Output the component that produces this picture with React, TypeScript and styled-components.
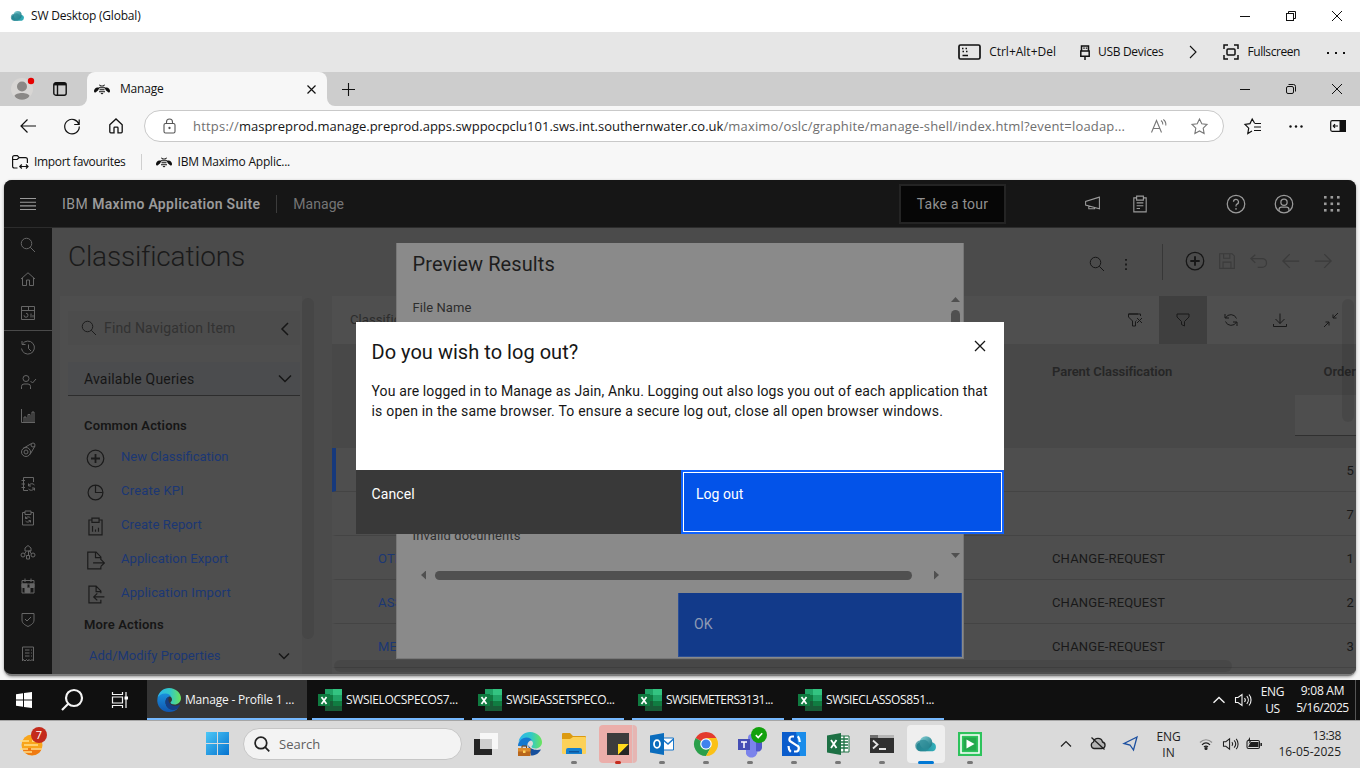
import React from "react";
import styled, { createGlobalStyle, css } from "styled-components";

const segoe = `"Open Sans", "Noto Sans", sans-serif`;
const plex = `Roboto, "Noto Sans", sans-serif`;

const GlobalStyle = createGlobalStyle`
  * { box-sizing: border-box; }
  body { margin: 0; background: #f7f7f7; font-family: ${segoe}; font-size: 12px; color: #111; overflow: hidden; }
`;

/* ---------- shared ---------- */
const Screen = styled.div`
  width: 1360px;
  height: 768px;
  display: flex;
  flex-direction: column;
  overflow: hidden;
`;
const Spacer = styled.div`flex: 1;`;
const Label = styled.span<{ $size?: number; $ls?: number; $color?: string; $w?: number; $ml?: number }>`
  white-space: pre;
  line-height: 20px;
  margin-left: ${(p) => p.$ml ?? 0}px;
  font-size: ${(p) => p.$size ?? 12}px;
  letter-spacing: ${(p) => p.$ls ?? 0}px;
  font-weight: ${(p) => p.$w ?? 400};
  ${(p) => p.$color && css`color: ${p.$color};`}
`;
const Slot = styled.div<{ $w: number; $h?: string }>`
  width: ${(p) => p.$w}px;
  height: ${(p) => p.$h ?? "100%"};
  flex: none;
  display: flex;
  align-items: center;
  justify-content: center;
`;
const Svg = styled.svg`
  display: block;
  flex: none;
  overflow: visible;
`;

type IconProps = { size?: number; w?: number; h?: number; vb?: string; sw?: number; color?: string; children?: React.ReactNode };
const Icon = ({ size = 16, w, h, vb = "0 0 32 32", sw = 2, color = "currentColor", children }: IconProps) => (
  <Svg width={w ?? size} height={h ?? size} viewBox={vb} fill="none" stroke={color} strokeWidth={sw}>
    {children}
  </Svg>
);

/* ---------- carbon style glyphs ---------- */
const glyph = {
  search: <><circle cx="13" cy="13" r="10.500" /><path d="M20.500 20.500 30 30" /></>,
  home: <path d="M2 16 16 3.500 30 16M5 14v15h8V18h6v11h8V14" />,
  dashboard: <><path d="M3 3h26v26H3zM3 11h26M17 3v8M22 17v8M26 20v5" /><path d="M12 16.500a4 4 0 1 1-4 4" /></>,
  history: <><path d="M5 8a13 13 0 1 1-2 9" /><path d="M4 2v7h7M17 9v8l5 5" /></>,
  userCheck: <><circle cx="12" cy="9" r="6" /><path d="M3 30v-5a5 5 0 0 1 5-5h8a5 5 0 0 1 5 5v5M21 14l4 4 7-8" /></>,
  chart: <path d="M3 2v27h27M8 29V18h4v11M16 29V13h4v16M24 29V8h4v21" />,
  rocket: <><circle cx="12" cy="20" r="9" /><circle cx="12" cy="20" r="4" /><circle cx="26" cy="6" r="4" /><path d="M6 13 23 3M20 25 30 8" /></>,
  notebook: <><path d="M16 29H7V3h20v9M3 9h7M3 16h7M3 23h7" /><path d="M29 18a7 7 0 0 0-12 2M17 15v5h5M17 26a7 7 0 0 0 12-2M29 29v-5h-5" /></>,
  clipRefresh: <><path d="M10 5H5v25h22V5h-5M10 2h12v7H10z" /><path d="M21 16a6 6 0 0 0-10 1M11 13v4h4M11 22a6 6 0 0 0 10-1M21 25v-4h-4" /></>,
  nodes: <><path d="M10 14V8l6-5 6 5v6h-5v8M10 14h12M9 20l3-5M23 20l-3-5" /><circle cx="6" cy="22" r="4" /><circle cx="26" cy="22" r="4" /><path d="M13 23h6v7h-6z" /></>,
  calendar: <><path d="M4 5h24v25H4zM4 12h24M10 1v7M22 1v7" /><path d="M4 12h10v7H4zM20 12h8v7h-8zM10 20h10v9H10z" fill="currentColor" /></>,
  shield: <><path d="M4 3h24v13c0 7-6 10-12 13C10 26 4 23 4 16z" /><path d="m10 14 4 4 8-8" /></>,
  receipt: <path d="M5 30V2h22v28l-3-3-3 3-3-3-2 3-3-3-3 3-3-3zM10 8h9M22 8h2M10 14h9M22 14h2M10 20h9M22 20h2" />,
  add: <><circle cx="16" cy="16" r="14" /><path d="M16 8.500v15M8.500 16h15" strokeWidth="3" /></>,
  kpi: <><circle cx="16" cy="16" r="12.500" /><path d="M16 3.500V16h12" /></>,
  report: <path d="M10 5H5v25h22V5h-5M10 2h12v7H10zM11 15v10M16 21v4M21 18v7" />,
  exportDoc: <path d="M25 26v4H3V2h14l8 8v5M16 2v9h9M12 20h18M25 14l6 6-6 6" />,
  importDoc: <path d="M25 25v5H5V2h12l8 8v4M17 2v9h8M31 20H14M19 14l-6 6 6 6" />,
  save: <path d="M3 3h22l4 4v22H3zM10 3v8h11V3M9 29V18h14v11" />,
  undo: <path d="M10 6 3 12l7 7M3 12h18a7 7 0 0 1 0 14h-7" />,
  left: <path d="M29 16H3M14 5 3 16l11 11" />,
  right: <path d="M3 16h26M18 5l11 11-11 11" />,
  filter: <path d="M4 4h24v6L19 19v9l-6-3v-6L4 10z" />,
  filterX: <path d="M22 4H3v6l8 8v10h6v-9l2-2M27 4H3M27 4v4M20 12l10 10M30 12 20 22" />,
  refresh: <path d="M4 12V4M4 12h8M5 12a12 12 0 0 1 22 1M28 20v8M28 20h-8M27 20a12 12 0 0 1-22-1" />,
  download: <path d="M16 3v20M7 14l9 9 9-9M3 24v5h26v-5" />,
  collapse: <path d="M20 5v7h7M20 12 30 2M5 20h7v7M12 20 2 30" />,
  megaphone: <path d="M29 4 3 12v7l26 7zM9 21v5h11v-2" />,
  clipboard: <path d="M10 5H5v25h22V5h-5M10 2h12v7H10zM10 14h12M10 19h12M10 24h6" />,
  help: <><circle cx="16" cy="16" r="14" /><path d="M12 12.500a4 4 0 1 1 5 4c-1 .5-1 1.200-1 3.500" /><path d="M16 22.500v2.500" /></>,
  user: <><circle cx="16" cy="16" r="14" /><circle cx="16" cy="13" r="5" /><path d="M8 27v-2a4 4 0 0 1 4-4h8a4 4 0 0 1 4 4v2" /></>,
};

/* ---------- remote desktop window chrome ---------- */
const TitleBar = styled.div`
  height: 32px; flex: none; background: #fff; display: flex; align-items: center; padding-left: 11px; gap: 6px;
`;
const WinButtons = styled.div`display: flex; height: 100%; margin-left: auto;`;
const ToolStrip = styled.div`
  height: 40px; flex: none; background: #e6e6e6; display: flex; align-items: center; justify-content: flex-end; padding-right: 15px;
`;
const ToolItem = styled.div<{ $gap: number; $mr: number }>`
  display: flex; align-items: center; gap: ${(p) => p.$gap}px; margin-right: ${(p) => p.$mr}px;
`;

const Cloud = ({ w = 14, h = 10 }: { w?: number; h?: number }) => (
  <Svg width={w} height={h} viewBox="0 0 40 30">
    <defs>
      <linearGradient id="cl1" x1="0" x2="1" y2="1"><stop offset="0" stopColor="#8ad3d8" /><stop offset="1" stopColor="#0d6f7c" /></linearGradient>
      <linearGradient id="cl2" x1="0" x2="1"><stop offset="0" stopColor="#137885" /><stop offset="1" stopColor="#35b2bd" /></linearGradient>
    </defs>
    <path d="M9 29a9 9 0 0 1-3-17h26a9 9 0 0 1 0 17z" fill="url(#cl2)" />
    <circle cx="19" cy="12" r="12" fill="url(#cl1)" />
    <path d="M9 8a11 11 0 0 1 10 21H9A10.500 10.500 0 0 1 9 8z" fill="#2b8a95" opacity=".75" />
  </Svg>
);

const MinMaxClose = ({ round }: { round?: boolean }) => (
  <WinButtons>
    <Slot $w={46}><Icon size={10} vb="0 0 10 10" sw={1}><path d="M0 5.500h10" /></Icon></Slot>
    <Slot $w={46}>
      <Icon size={10} vb="0 0 10 10" sw={1}>
        <rect x=".5" y="2.500" width="7" height="7" rx={round ? 1.5 : 0} />
        <path d={round ? "M2.500.5h5a2 2 0 0 1 2 2v5" : "M2.500 2.500v-2h7v7h-2"} />
      </Icon>
    </Slot>
    <Slot $w={46}><Icon size={10} vb="0 0 10 10" sw={1}><path d="m0 0 10 10M10 0 0 10" /></Icon></Slot>
  </WinButtons>
);

/* ---------- browser ---------- */
const TabStrip = styled.div`
  height: 34px; flex: none; background: #cdcdcd; display: flex;
`;
const TabLead = styled.div`
  width: 87px; background: #cdcdcd; border-bottom-right-radius: 8px; display: flex; align-items: center; padding-left: 11px; gap: 20px;
`;
const TabShell = styled.div`background: linear-gradient(#cdcdcd 50%, #f7f7f7 50%); display: flex; flex: 1;`;
const Tab = styled.div`
  width: 240px; background: #f7f7f7; border-radius: 8px 8px 0 0; display: flex; align-items: center; padding: 0 11px 0 7px; gap: 10px;
`;
const TabRest = styled.div`
  flex: 1; background: #cdcdcd; border-bottom-left-radius: 8px; display: flex; align-items: center; padding-left: 15px;
`;
const AddressRow = styled.div`
  height: 40px; flex: none; background: #f7f7f7; display: flex; align-items: center;
`;
const UrlBox = styled.div`
  width: 1080px; flex: none; height: 32px; border: 1px solid #c9c9c9; border-radius: 16px; background: #fff; display: flex; align-items: center; padding: 0 4px 0 18px;
`;
const UrlText = styled.div`
  margin-left: 16px; flex: 1; font-size: 13px; white-space: pre; color: #6f6f6f; line-height: 20px;
`;
const UrlPart = styled.span<{ $ls: number; $dark?: boolean }>`
  letter-spacing: ${(p) => p.$ls}px; ${(p) => p.$dark && css`color: #161616;`}
`;
const Bookmarks = styled.div`
  height: 34px; flex: none; background: #f7f7f7; display: flex; align-items: center; padding: 0 0 3px 12px;
`;
const BookmarkSep = styled.div`width: 1px; height: 16px; background: #cfcfcf; margin: 0 14px 0 15px;`;

const Bee = () => (
  <Svg width="16" height="12" viewBox="0 0 32 24" fill="#111">
    <path d="M11 9H6c-4 1-6 4-6 7 0 2 1 3 3 3 2-1 3-3 5-4 1-2 2-3 3-6zM21 9h5c4 1 6 4 6 7 0 2-1 3-3 3-2-1-3-3-5-4-1-2-2-3-3-6z" />
    <path d="M11 3l3 2h4l3-2 1 1-3 3h-6l-3-3zM10 8.500h12v2H10zM11 12.500h10v2H11zM10 16.500h12v2H10zM13 20h6L16 23z" />
  </Svg>
);

/* ---------- application frame ---------- */
const FrameWrap = styled.div`
  height: 500px; flex: none; background: #f5f5f5; padding: 0 4px 4px; 
`;
const Frame = styled.div`
  height: 496px; position: relative; border-radius: 8px; overflow: hidden; background: #4c4c4c; border-bottom: 2px solid #7d7d7d;
  box-shadow: 0 1px 3px #999; display: flex; flex-direction: column; font-family: ${plex}; color: #161616;
`;
const AppHeader = styled.div`
  height: 48px; flex: none; background: #161616; border-bottom: 1px solid #2c2c2c; display: flex; align-items: center; color: #9a9a9a;
`;
const HeaderDivider = styled.div`width: 1px; height: 18px; background: #3c3c3c; margin: 0 16px;`;
const TourButton = styled.div`
  width: 107px; height: 40px; margin: 1px 62px 0 auto; border: 2px solid #242424; background: #060606; color: #909090;
  display: flex; align-items: center; justify-content: center;
`;
const AppBody = styled.div`flex: 1; min-height: 0; display: flex;`;
const Rail = styled.div`width: 48px; flex: none; background: #161616; color: #666;`;
const RailItem = styled.div<{ $rule?: boolean }>`
  height: ${(p) => (p.$rule ? 35 : 34)}px; display: flex; align-items: center; justify-content: center;
  ${(p) => p.$rule && css`border-bottom: 1px solid #4a4a4a;`}
`;
const Main = styled.div`flex: 1; min-width: 0; display: flex; flex-direction: column; background: #4b4b4b;`;
const PageHead = styled.div`height: 68px; flex: none; display: flex; align-items: flex-start; padding: 0 17px 0 16px;`;
const PageTitle = styled.h1`
  margin: 11px auto 0 0; font-weight: 300; font-size: 28px; letter-spacing: -0.18px; line-height: 36px; color: #1a1a1a;
`;
const HeadRule = styled.div`width: 1px; height: 36px; margin: 16px 16px 0 24px; background: #373737;`;
const Columns = styled.div`flex: 1; min-height: 0; display: flex; padding-left: 8px;`;

const Nav = styled.div`width: 242px; flex: none; background: #4e4e4e; padding: 15px 2px 0 8px; display: flex; flex-direction: column;`;
const NavScroll = styled.div`width: 12px; height: 341px; margin: 2px 18px 0 0; border-radius: 6px; background: #464646; flex: none;`;
const FindRow = styled.div`
  height: 34px; flex: none; display: flex; align-items: center; padding: 0 9px 0 13px; gap: 7px; color: #323232; background: #4c4c4c;
`;
const QueryRow = styled.div`
  height: 34px; flex: none; margin-top: 17px; border-bottom: 1px solid #2d2d2d; background: #4b4c4e; display: flex; align-items: center; padding: 0 9px 0 16px; justify-content: space-between;
`;
const NavHeading = styled.div<{ $mt: number }>`
  margin: ${(p) => p.$mt}px 0 0 16px; height: 20px; line-height: 20px; font-size: 13px; font-weight: 600; letter-spacing: 0.15px; white-space: pre; flex: none;
`;
const NavList = styled.div`padding-top: 4px; flex: none;`;
const NavItem = styled.div`
  height: 34px; display: flex; padding-left: 18px; gap: 17px; color: #1b1b1b;
`;
const NavIcon = styled.div`padding-top: 3px; height: 34px; width: 18px; display: flex; align-items: center; justify-content: center;`;
const NavLink = styled.span<{ $ls?: number }>`
  font-size: 13px; line-height: 34px; color: #1b3774; white-space: pre; letter-spacing: ${(p) => p.$ls ?? 0}px;
`;
const MoreRow = styled.div`height: 40px; flex: none; display: flex; align-items: center; padding: 2px 11px 0 21px; justify-content: space-between;`;

const Table = styled.div`flex: 1; min-width: 0; display: flex; flex-direction: column; background: #4e4e4e; overflow: hidden;`;
const TableTools = styled.div`height: 48px; flex: none; display: flex; align-items: center; padding-left: 18px; background: #4f4f4f; color: #191919;`;
const ToolCell = styled.div<{ $on?: boolean; $w?: number }>`
  width: ${(p) => p.$w ?? 48}px; height: 48px; display: flex; align-items: center; justify-content: center; flex: none;
  background: ${(p) => (p.$on ? "#3f3f3f" : "transparent")};
`;
const TableHead = styled.div`
  height: 104px; flex: none; background: #484848; display: flex; padding: 18px 0 0 720px; justify-content: space-between; color: #262626;
`;
const OrderCol = styled.div`display: flex; flex-direction: column; align-items: flex-end; gap: 13px;`;
const FilterField = styled.div`width: 61px; height: 41px; background: #4e4e4e; border-bottom: 1px solid #303030;`;
const TableRow = styled.div<{ $first?: boolean }>`
  height: 44px; flex: none; border-bottom: 1px solid #444; display: flex; align-items: center; color: #191919;
  border-left: 4px solid ${(p) => (p.$first ? "#16397c" : "transparent")};
  padding: 2px 2px 0 42px;
`;
const Cell = styled.span<{ $w?: number; $link?: boolean; $end?: boolean }>`
  font-size: 13px; white-space: pre; letter-spacing: 0.15px;
  ${(p) => p.$w && css`width: ${p.$w}px;`}
  ${(p) => p.$link && css`color: #1b3774;`}
  ${(p) => p.$end && css`margin-left: auto;`}
`;
const ScrollOverlay = styled.div<{ $x: number; $y: number; $w: number; $h: number }>`
  position: absolute; left: ${(p) => p.$x}px; top: ${(p) => p.$y}px; width: ${(p) => p.$w}px; height: ${(p) => p.$h}px;
  border-radius: 7px; background: rgba(0, 0, 0, 0.08);
`;

/* ---------- dialogs ---------- */
const Preview = styled.div`
  position: absolute; left: 392px; top: 63px; width: 568px; height: 416px; background: #8a8a8a; border: 1px solid #777; border-width: 0 1px 1px 1px;
  display: flex; flex-direction: column; color: #1d1d1d;
`;
const PreviewTitle = styled.div`font-size: 20px; line-height: 28px; letter-spacing: 0.1px; padding: 7px 15.5px 0; height: 50px; flex: none;`;
const PreviewBody = styled.div`flex: 1; display: flex; padding-left: 15.5px;`;
const PreviewFields = styled.div`flex: 1; display: flex; flex-direction: column; justify-content: space-between; padding: 5px 0 24px; color: #2d2d2d;`;
const VScroll = styled.div`width: 15px; display: flex; flex-direction: column; align-items: center; justify-content: space-between; padding: 4px 0 12px;`;
const VThumb = styled.div`width: 9px; flex: 1; margin: 8px 0 150px; border-radius: 5px; background: #505050;`;
const HScroll = styled.div`height: 10px; display: flex; align-items: center; padding: 0 24px 0 24px;`;
const HThumb = styled.div`flex: 1; height: 9px; margin: 0 22px 0 9px; border-radius: 5px; background: #505050;`;
const Arrow = styled.div<{ $dir: "up" | "down" | "left" | "right" }>`
  width: ${(p) => (p.$dir === "up" || p.$dir === "down" ? 9 : 5)}px;
  height: ${(p) => (p.$dir === "up" || p.$dir === "down" ? 5 : 9)}px;
  flex: none;
  background: #505050;
  clip-path: ${(p) =>
    ({ up: "polygon(50% 0,100% 100%,0 100%)", down: "polygon(0 0,100% 0,50% 100%)", left: "polygon(100% 0,100% 100%,0 50%)", right: "polygon(0 0,100% 50%,0 100%)" })[p.$dir]};
`;
const PreviewFoot = styled.div`height: 78px; display: flex; justify-content: flex-end; padding: 13px 1px 1px 0;`;
const OkButton = styled.div`width: 284px; height: 64px; background: #123a8a; border: 1px solid #2b4f96; border-width: 0 1px 1px 1px; padding: 21px 15px; color: #8e9ab4;`;

const LogoutDialog = styled.div`
  position: absolute; left: 352px; top: 142px; width: 648px; height: 212px; background: #fff; display: flex; flex-direction: column; color: #161616;
`;
const LogoutTop = styled.div`display: flex; justify-content: space-between; padding: 16px 19px 0 15.5px; height: 48px;`;
const LogoutTitle = styled.div`font-size: 20px; line-height: 28px; letter-spacing: 0.03px;`;
const LogoutText = styled.div`padding: 11px 15.5px 0; font-size: 14px; line-height: 20px; height: 100px; white-space: pre;`;
const LogoutLine = styled.div<{ $ls: number }>`letter-spacing: ${(p) => p.$ls}px;`;
const LogoutFoot = styled.div`height: 64px; display: flex; color: #fff;`;
const DialogButton = styled.div<{ $primary?: boolean }>`
  width: ${(p) => (p.$primary ? 323 : 325)}px; padding: 14px 15.5px;
  background: #393939;
  ${(p) => p.$primary && css`background: #0353e9; border: 2px solid #0f62fe; box-shadow: inset 0 0 0 1px #fff; padding: 12px 13px;`}
`;

/* ---------- remote taskbar ---------- */
const DarkBar = styled.div`height: 40px; flex: none; background: #101010; display: flex; color: #f4f4f4;`;
const DarkApp = styled.div<{ $on?: boolean }>`
  width: ${(p) => (p.$on ? 160 : 152)}px; margin: 0 ${(p) => (p.$on ? 5 : 8)}px 0 ${(p) => (p.$on ? 3 : 0)}px; padding: 1px 0 0 ${(p) => (p.$on ? 10 : 6)}px;
  display: flex; align-items: center; gap: 4px; border-bottom: 2px solid #76b9ff; background: ${(p) => (p.$on ? "#353535" : "transparent")};
`;
const TwoLine = styled.div<{ $w: number; $lh: number; $pt: number; $align?: string }>`
  width: ${(p) => p.$w}px; padding-top: ${(p) => p.$pt}px; display: flex; flex-direction: column; align-items: ${(p) => p.$align ?? "center"};
  & > span { line-height: ${(p) => p.$lh}px; }
`;
const BarEnd = styled.div`width: 1px; background: #555; margin-right: 4px;`;

/* ---------- host taskbar ---------- */
const LightBar = styled.div`
  height: 48px; flex: none; background: #dadada; border-top: 1px solid #a6a6a6; padding-bottom: 2px; display: flex; align-items: center; color: #1f1f1f;
`;
const WeatherSlot = styled.div`position: relative; width: 48px; height: 47px; padding: 14px 0 0 20px;`;
const Badge = styled.div`
  position: absolute; left: 31px; top: 7px; width: 16px; height: 16px; border-radius: 8px; background: #c42b1c; color: #fff; font-size: 11px; line-height: 16px; text-align: center;
`;
const SearchPill = styled.div`
  width: 219px; height: 32px; margin: 0 2px 0 14px; border-radius: 16px; background: #f3f3f3; border: 1px solid #c6c6c6; display: flex; align-items: center; padding-left: 10px; gap: 9px; color: #5e5e5e;
`;
const DockItem = styled.div<{ $bg?: string }>`
  width: 38px; margin: 0 3px; height: 38px; border-radius: 4px; display: flex; align-items: center; justify-content: center; position: relative;
  background: ${(p) => p.$bg ?? "transparent"};
`;
const Dot = styled.div<{ $c?: string; $w?: number }>`
  position: absolute; bottom: -1px; left: ${(p) => 19 - (p.$w ?? 6) / 2}px; width: ${(p) => p.$w ?? 6}px; height: 3px; border-radius: 2px; background: ${(p) => p.$c ?? "#777"};
`;

const EdgeGradients = () => (
  <defs>
    <linearGradient id="eg1" x1="0" x2="1"><stop offset="0" stopColor="#2bb4ee" /><stop offset=".55" stopColor="#33c9c5" /><stop offset="1" stopColor="#6be45a" /></linearGradient>
    <linearGradient id="eg2" x1="0" y1="0" x2="0" y2="1"><stop offset="0" stopColor="#1a8fdc" /><stop offset="1" stopColor="#1055ae" /></linearGradient>
  </defs>
);
const Edge = () => (
  <Svg width="24" height="24" viewBox="0 0 48 48">
    <EdgeGradients />
    <path d="M1 20C3 8 13 0 24 0c14 0 24 11 24 20 0 8-6 13-13 13-5 0-8-2-8-4 0-1 3-2 3-6 0-4-4-9-12-9C8 14 2 18 1 20z" fill="url(#eg1)" />
    <path d="M1 20c2-5 8-9 16-9 6 0 10 3 11 6-4-1-11 3-11 11 0 8 6 15 15 15 5 0 9-2 11-4-4 6-11 9-19 9C10 48-2 36 1 20z" fill="url(#eg2)" />
    <path d="M17 28c0-6 3-10 8-11-3 3-3 9 0 13 4 6 13 7 19 4 1-1 2 0 1 2-3 5-8 8-13 8-9 0-15-8-15-16z" fill="#153e85" />
  </Svg>
);
const Excel = () => (
  <Svg width="24" height="22" viewBox="0 0 24 22">
    <path d="M7 0h8v6H7z" fill="#21a366" /><path d="M15 0h9v6h-9z" fill="#33c481" />
    <path d="M7 6h8v6H7zM15 12h9v5h-9z" fill="#107c41" /><path d="M15 6h9v6h-9z" fill="#21a366" />
    <path d="M7 12h8v5H7zM7 17h17v5H7z" fill="#185c37" />
    <path d="M0 5h12v12H0z" fill="#0f7a40" />
    <path d="m3.500 8 5 7M8.500 8l-5 7" stroke="#fff" strokeWidth="1.700" />
  </Svg>
);
const Volume = ({ w = 17 }: { w?: number }) => (
  <Icon w={w} h={14} vb="0 0 17 14" sw={1.1}>
    <path d="M.5 4.500h2.500L7 1.500v11L3 9.500H.5zM9.500 5c1 1.200 1 2.800 0 4M11.800 3.200c2 2.200 2 5.400 0 7.600M14 1.500c2.700 3 2.700 8 0 11" />
  </Icon>
);
const Chevron = ({ d, w, h, sw = 1.5 }: { d: string; w: number; h: number; sw?: number }) => (
  <Icon w={w} h={h} vb={`0 0 ${w} ${h}`} sw={sw}><path d={d} /></Icon>
);

const dock: { bg?: string; dot?: string; dotW?: number; art: React.ReactNode }[] = [
  { art: <Svg width="24" height="22" viewBox="0 0 24 22"><path d="M0 6h18v16H0z" fill="#252525" /><path d="M6 0h18v16H6z" fill="#fff" opacity=".78" /></Svg> },
  { art: <Svg width="24" height="24" viewBox="0 0 48 48"><path d="M1 20C3 8 13 0 24 0c14 0 24 11 24 20 0 8-6 13-13 13-5 0-8-2-8-4 0-1 3-2 3-6 0-4-4-9-12-9C8 14 2 18 1 20z" fill="url(#eg1)" /><path d="M0 28c0-9 8-17 17-17 6 0 10 3 11 6-5-1-10 4-9 12z" fill="#1478d0" /><path d="M20 26c6 10 16 11 26 9-5 9-12 12-20 12z" fill="#164f9c" /><path d="M0 32h25v16H0z" fill="#b8661b" /><path d="M0 32h25v7H0z" fill="#dc8b2c" /><path d="M8 32v-4h9v4" fill="none" stroke="#7b4312" strokeWidth="2" /><path d="M10 37h5v5h-5z" fill="#ffd45c" /></Svg> },
  { dot: "#777", art: <Svg width="24" height="22" viewBox="0 0 24 22"><path d="M0 1q0-1 1-1h7l3 3h12q1 0 1 1v6H0z" fill="#dc9a10" /><path d="M0 6h8l3-2h12q1 0 1 1v15q0 1-1 1H1q-1 0-1-1z" fill="#fcd158" /><path d="M4 21v-4q0-2 2-2h12q2 0 2 2v4z" fill="#1580cf" /><path d="M7 18h10v1.500H7z" fill="#0c549c" /></Svg> },
  { dot: "#c42b1c", bg: "linear-gradient(90deg, #ebaeaa 33px, #dcc6c4 33px 34px, #e6b5b2 34px)", art: <Svg width="22" height="22" viewBox="0 0 22 22"><path d="M0 0h22v22H0z" fill="#3c3c3c" /><path d="M11 11h11L11 22z" fill="#ffd91c" /><path d="M22 11v11H11z" fill="#252525" /></Svg> },
  { dot: "#777", art: <Svg width="24" height="22" viewBox="0 0 24 22"><path d="M12 5h11.500v12H12z" fill="#fff" stroke="#1a77c9" /><path d="m12 6 6 5 5.500-5" fill="none" stroke="#1a77c9" strokeWidth="1.500" /><path d="M0 2.500 14 0v22L0 19.500z" fill="#0a6cbd" /><ellipse cx="7" cy="11" rx="3" ry="3.800" fill="none" stroke="#fff" strokeWidth="1.800" /></Svg> },
  { dot: "#777", art: <Svg width="24" height="24" viewBox="0 0 24 24"><path d="M12 12 1.600 6A12 12 0 0 1 22.400 6z" fill="#e33b2e" /><path d="M12 12 1.600 6A12 12 0 0 0 12 24l5-9z" fill="#2a9f4a" /><path d="M12 6h10.400A12 12 0 0 1 12 24l5-9z" fill="#fbc116" /><circle cx="12" cy="12" r="5.800" fill="#fff" /><circle cx="12" cy="12" r="4.600" fill="#3f82ed" /></Svg> },
  { dot: "#777", art: <Svg width="24" height="24" viewBox="0 0 24 24"><circle cx="14" cy="6" r="4" fill="#7b83eb" /><path d="M8 9h11v8a5.500 5.500 0 0 1-11 5z" fill="#7b83eb" /><path d="M18 10h6v6a4 4 0 0 1-6 3z" fill="#5059c9" /><path d="M0 7h12v11H0z" fill="#454eb5" /><path d="M3 10h6M6 10v6" stroke="#fff" strokeWidth="1.500" fill="none" /><circle cx="21" cy="3" r="8" fill="#13a10e" /><path d="m17.800 3.200 2.400 2.300 4-4.300" stroke="#fff" strokeWidth="1.600" fill="none" /></Svg> },
  { dot: "#777", art: <Svg width="24" height="24" viewBox="0 0 24 24"><path d="M0 0h24v24H0z" fill="#0a5ccc" /><path d="M14 0h10v24h-6z" fill="#1a8cea" /><path d="M12 4.500h-1.500a2.800 2.800 0 0 0-1.500 5.300l6 3.800a3.100 3.100 0 0 1-1.500 5.900H12M6.500 14c0 2.500.8 4.500 2.300 5.800M17.800 10c0-2.500-.6-4.300-2-5.800" stroke="#fff" strokeWidth="2.200" fill="none" /></Svg> },
  { dot: "#777", art: <Svg width="22" height="22" viewBox="0 0 22 22"><path d="M12 3h10v16H12z" fill="#fff" stroke="#1f7345" /><path d="M12 6h9M12 9h9M12 12h9M12 15h9M17 3v16" stroke="#1f7345" strokeWidth="1.300" /><path d="M0 2.500 14 0v22L0 19.500z" fill="#1d7044" /><path d="m4 7 5.500 8M9.500 7 4 15" stroke="#fff" strokeWidth="1.800" /></Svg> },
  { dot: "#777", art: <Svg width="24" height="18" viewBox="0 0 24 18"><path d="M0 0h24v18H0z" fill="#303030" /><path d="M0 0h24v3H0z" fill="#b5b5b5" /><path d="M0 0h8v3H0z" fill="#707070" /><path d="m3 5.500 4.500 4L3 13.500M9 14h7" stroke="#e5e5e5" strokeWidth="1.800" fill="none" /></Svg> },
  { dot: "#0078d4", dotW: 16, bg: "#efefef", art: <Cloud w={21} h={16} /> },
  { dot: "#777", art: <Svg width="24" height="24" viewBox="0 0 24 24"><path d="M0 0h24v24H0z" fill="#2dc35c" /><path d="M3 3h18v18H3z" fill="none" stroke="#fff" strokeWidth="1.600" /><path d="M5.500 5.500h13v13h-13z" fill="#23a84c" /><path d="m8.500 7.500 8 4.500-8 4.500z" fill="#fff" /></Svg> },
];

const rail: [React.ReactNode, boolean?][] = [
  [glyph.search], [glyph.home], [glyph.dashboard, true], [glyph.history], [glyph.userCheck], [glyph.chart], [glyph.rocket],
  [glyph.notebook], [glyph.clipRefresh], [glyph.nodes], [glyph.calendar], [glyph.shield], [glyph.receipt],
];
const actions: [React.ReactNode, string, number][] = [
  [glyph.add, "New Classification", 0], [glyph.kpi, "Create KPI", 0.2], [glyph.report, "Create Report", 0.1],
  [glyph.exportDoc, "Application Export", 0.07], [glyph.importDoc, "Application Import", 0.15],
];
const rows: [string, string, string][] = [
  ["", "", "5"], ["", "", "7"], ["OTHER", "CHANGE-REQUEST", "1"], ["ASSET", "CHANGE-REQUEST", "2"], ["METER", "CHANGE-REQUEST", "3"],
];
const files: [string, number][] = [["SWSIELOCSPECOS7...", -0.33], ["SWSIEASSETSPECO...", -0.36], ["SWSIEMETERS3131...", -0.5], ["SWSIECLASSOS851...", -0.38]];
const gridSteps = [0, 6.5, 13];

export default function App() {
  return (
    <Screen>
      <GlobalStyle />
      <TitleBar>
        <Cloud />
        <Label $ls={-0.2}>SW Desktop (Global)</Label>
        <MinMaxClose />
      </TitleBar>
      <ToolStrip>
        <ToolItem $gap={8} $mr={24}>
          <Icon w={23} h={16} vb="0 0 23 16" sw={1.7}>
            <rect x="1" y="1" width="21" height="14" rx="1.500" />
            <path d="M4 4.500h1.500M7.500 4.500H9M4.500 7.500H6M8 7.500h1.500M4.500 11.500H10" strokeWidth="1.400" />
          </Icon>
          <Label>Ctrl+Alt+Del</Label>
        </ToolItem>
        <ToolItem $gap={8} $mr={27}>
          <Icon w={10} h={15} vb="0 0 10 15" sw={1.5}>
            <path d="M1.500 6V1h7v5M.8 6h8.400v5.200H.8zM5 11v4M4 2.500v1.200M6.500 2.500v1.200" />
          </Icon>
          <Label $ls={-0.31}>USB Devices</Label>
        </ToolItem>
        <ToolItem $gap={0} $mr={27}>
          <Chevron w={6} h={12} d="m0 0 6 6-6 6" sw={1.1} />
        </ToolItem>
        <ToolItem $gap={8} $mr={27}>
          <Icon size={16} vb="0 0 16 16" sw={1.5}>
            <path d="M1 5V1h4M11 1h4v4M15 11v4h-4M5 15H1v-4" />
            <rect x="4" y="5" width="8" height="6" rx="1" />
          </Icon>
          <Label $ls={-0.43}>Fullscreen</Label>
        </ToolItem>
        <Icon w={18} h={3} vb="0 0 18 3" sw={0}><path d="M0 1h2v2H0zM8 1h2v2H8zM16 1h2v2h-2z" fill="#111" /></Icon>
      </ToolStrip>

      <TabStrip>
        <TabShell>
          <TabLead>
            <Svg width="22" height="22" viewBox="0 0 22 22">
              <circle cx="11" cy="11" r="11" fill="#d8d6d4" />
              <circle cx="11" cy="8.500" r="5" fill="#8a8886" />
              <path d="M3.500 18c1-4 14-4 15 0-3 5-12 5-15 0z" fill="#8a8886" />
              <circle cx="20" cy="3" r="3.200" fill="#e60000" />
            </Svg>
            <Icon size={14} vb="0 0 14 14" sw={1.4}>
              <rect x=".8" y=".8" width="12.400" height="12.400" rx="2" />
              <path d="M1 2.200h12" strokeWidth="2.400" />
              <path d="M4.500 3v10" />
            </Icon>
          </TabLead>
          <Tab>
            <Bee />
            <Label $ls={-0.2}>Manage</Label>
            <Spacer />
            <Icon size={9} vb="0 0 9 9" sw={1.2}><path d="m.5.5 8 8M8.500.5l-8 8" /></Icon>
          </Tab>
          <TabRest>
            <Icon size={13} vb="0 0 13 13" sw={1.1}><path d="M6.500 0v13M0 6.500h13" /></Icon>
            <MinMaxClose round />
          </TabRest>
        </TabShell>
      </TabStrip>

      <AddressRow>
        <Slot $w={56}><Icon w={16} h={14} vb="0 0 16 14" sw={1.2}><path d="M16 7H1M7.500.5 1 7l6.500 6.500" /></Icon></Slot>
        <Slot $w={32}><Icon size={16} vb="0 0 16 16" sw={1.2}><path d="M15 6.500A7.300 7.300 0 1 0 15.300 8.500M15.200 1.500v5h-5" /></Icon></Slot>
        <Slot $w={56}><Icon w={14} h={16} vb="0 0 14 16" sw={1.3}><path d="M.8 6.800 7 1l6.200 5.800v7q0 1-1 1H9V10q0-.8-.8-.8H5.800Q5 9.200 5 10v4.800H1.800q-1 0-1-1z" /></Icon></Slot>
        <UrlBox>
          <Icon w={14} h={16} vb="0 0 14 16" sw={1.1} color="#555"><rect x="1" y="5.500" width="11" height="9.500" rx="1.500" /><path d="M3.500 5.500V4a3 3 0 0 1 6 0v1.500" /><circle cx="6.500" cy="10" r=".6" fill="#555" /></Icon>
          <UrlText>
            <UrlPart $ls={0.2}>https://</UrlPart>
            <UrlPart $ls={0} $dark>maspreprod.manage.preprod.apps.swppocpclu101.sws.int.southernwater.co.uk</UrlPart>
            <UrlPart $ls={0.17}>/maximo/oslc/graphite/manage-shell/index.html?event=loadap...</UrlPart>
          </UrlText>
          <Slot $w={40}><Icon w={16} h={14} vb="0 0 16 14" sw={1.1} color="#777"><path d="m.5 13.500 5-12 5 12M2.200 9.500h6.600M10 1.500c1.400 1 2 2.400 1.800 4M12.300.5c2 1.500 2.800 3.500 2.500 6" /></Icon></Slot>
          <Slot $w={40}><Icon size={17} vb="0 0 17 17" sw={1.1} color="#777"><path d="m8.500 1 2.300 4.800 5.200.7-3.800 3.700.9 5.300-4.600-2.500-4.600 2.500.9-5.300L1 6.500l5.200-.7z" /></Icon></Slot>
        </UrlBox>
        <Slot $w={56}><Icon size={17} vb="0 0 17 17" sw={1.2}><path d="M10.500 5 8.200 1 6 5.600l-5 .8 3.700 3.700-.9 5.400 4.200-2.400M10.500 5.500H17M10 9h7M10 12.500h7" /></Icon></Slot>
        <Slot $w={32}><Icon w={14} h={3} vb="0 0 14 3" sw={0}><g fill="#111"><circle cx="1.500" cy="1.500" r="1.200" /><circle cx="7" cy="1.500" r="1.200" /><circle cx="12.500" cy="1.500" r="1.200" /></g></Icon></Slot>
        <Slot $w={52}><Icon w={16} h={12} vb="0 0 16 12" sw={1.2}><rect x=".7" y=".7" width="14.600" height="10.600" rx="1.500" /><path d="M9.500 0H16v12H9.500z" fill="#111" stroke="none" /><path d="M8 6H3.500M5 4.200 3.300 6 5 7.800" /></Icon></Slot>
      </AddressRow>

      <Bookmarks>
        <Icon w={16} h={14} vb="0 0 16 14" sw={1.2}><path d="M5.500 13H2.500Q.6 13 .6 11V2.500Q.6.6 2.500.6h2.800l2 2H13.500Q15.400 2.600 15.400 4.500V8M.6 4.500h4.500l2.200-2M8 11.500h8M9.800 9.500l-2 2 2 2M14 9.500l2 2-2 2" /></Icon>
        <Label $ls={-0.34} $ml={6}>Import favourites</Label>
        <BookmarkSep />
        <Bee />
        <Label $ls={-0.21} $ml={6}>IBM Maximo Applic...</Label>
      </Bookmarks>

      <FrameWrap>
        <Frame>
          <AppHeader>
            <Slot $w={48}><Icon w={16} h={12} vb="0 0 16 12" sw={1.1}><path d="M0 .5h16M0 4.200h16M0 7.900h16M0 11.500h16" /></Icon></Slot>
            <Label $size={14} $ls={0.5} $ml={10}>IBM </Label>
            <Label $size={14} $ls={0.3} $w={600}>Maximo Application Suite</Label>
            <HeaderDivider />
            <Label $size={14} $ls={0.05} $color="#757575">Manage</Label>
            <TourButton><Label $size={14} $ls={0.22}>Take a tour</Label></TourButton>
            <Slot $w={48}><Icon size={17}>{glyph.megaphone}</Icon></Slot>
            <Slot $w={48}><Icon size={18}>{glyph.clipboard}</Icon></Slot>
            <Slot $w={48} />
            <Slot $w={48}><Icon size={20}>{glyph.help}</Icon></Slot>
            <Slot $w={48}><Icon size={20}>{glyph.user}</Icon></Slot>
            <Slot $w={48}>
              <Icon size={16} vb="0 0 16 16" sw={0}>
                {gridSteps.map((y) => gridSteps.map((x) => <rect key={`${x}-${y}`} x={x} y={y} width="2.600" height="2.600" fill="#9a9a9a" />))}
              </Icon>
            </Slot>
          </AppHeader>
          <AppBody>
            <Rail>
              {rail.map(([g, rule], i) => (
                <RailItem key={i} $rule={rule}><Icon size={16}>{g}</Icon></RailItem>
              ))}
            </Rail>
            <Main>
              <PageHead>
                <PageTitle>Classifications</PageTitle>
                <Slot $w={32} $h="72px"><Icon size={16}>{glyph.search}</Icon></Slot>
                <Slot $w={25} $h="72px"><Icon w={2} h={11} vb="0 0 2 12" sw={0}><path d="M0 0h2v2H0zM0 5h2v2H0zM0 10h2v2H0z" fill="#191919" /></Icon></Slot>
                <HeadRule />
                <Slot $w={32} $h="66px"><Icon size={20}>{glyph.add}</Icon></Slot>
                <Slot $w={32} $h="66px"><Icon size={18} color="#3b3b3b">{glyph.save}</Icon></Slot>
                <Slot $w={32} $h="66px"><Icon size={20} color="#3b3b3b">{glyph.undo}</Icon></Slot>
                <Slot $w={32} $h="66px"><Icon size={20} color="#3b3b3b">{glyph.left}</Icon></Slot>
                <Slot $w={32} $h="66px"><Icon size={20} color="#3b3b3b">{glyph.right}</Icon></Slot>
              </PageHead>
              <Columns>
                <Nav>
                  <FindRow>
                    <Icon size={16} color="#1c1c1c">{glyph.search}</Icon>
                    <Label $size={14} $ls={0.14}>Find Navigation Item</Label>
                    <Spacer />
                    <Icon w={12} h={12} vb="0 0 12 12" sw={1.5} color="#161616"><path d="M9 1 3 7l6 6" /></Icon>
                  </FindRow>
                  <QueryRow>
                    <Label $size={14} $ls={0.19}>Available Queries</Label>
                    <Chevron w={12} h={7} d="m0 .5 6 6 6-6" />
                  </QueryRow>
                  <NavHeading $mt={20}>Common Actions</NavHeading>
                  <NavList>
                    {actions.map(([g, t, ls]) => (
                      <NavItem key={t}><NavIcon><Icon size={19}>{g}</Icon></NavIcon><NavLink $ls={ls}>{t}</NavLink></NavItem>
                    ))}
                  </NavList>
                  <NavHeading $mt={5}>More Actions</NavHeading>
                  <MoreRow><NavLink>Add/Modify Properties</NavLink><Chevron w={10} h={6} d="m0 .5 5 5 5-5" /></MoreRow>
                </Nav>
                <NavScroll />
                <Table>
                  <TableTools>
                    <Label $size={13} $ls={0.1} $color="#2c2c2c">Classifications</Label>
                    <Spacer />
                    <ToolCell><Icon size={16}>{glyph.filterX}</Icon></ToolCell>
                    <ToolCell $on><Icon size={16}>{glyph.filter}</Icon></ToolCell>
                    <ToolCell><Icon size={16}>{glyph.refresh}</Icon></ToolCell>
                    <ToolCell $w={50}><Icon size={16}>{glyph.download}</Icon></ToolCell>
                    <ToolCell $w={51}><Icon size={16}>{glyph.collapse}</Icon></ToolCell>
                  </TableTools>
                  <TableHead>
                    <Label $size={13} $ls={-0.06} $w={600}>Parent Classification</Label>
                    <OrderCol><Label $size={13} $w={600}>Order</Label><FilterField /></OrderCol>
                  </TableHead>
                  {rows.map(([a, b, n], i) => (
                    <TableRow key={n} $first={i === 0}><Cell $link $w={674}>{a}</Cell><Cell>{b}</Cell><Cell $end>{n}</Cell></TableRow>
                  ))}
                </Table>
              </Columns>
            </Main>
          </AppBody>
          <ScrollOverlay $x={330} $y={480} $w={898} $h={12} />
          <ScrollOverlay $x={1338} $y={119} $w={12} $h={123} />

          <Preview>
            <PreviewTitle>Preview Results</PreviewTitle>
            <PreviewBody>
              <PreviewFields>
                <Label $size={13} $ls={0.07}>File Name</Label>
                <Label $size={13} $ls={0.12}>Invalid documents</Label>
              </PreviewFields>
              <VScroll><Arrow $dir="up" /><VThumb /><Arrow $dir="down" /></VScroll>
            </PreviewBody>
            <HScroll><Arrow $dir="left" /><HThumb /><Arrow $dir="right" /></HScroll>
            <PreviewFoot><OkButton><Label $size={14} $ls={0.1}>OK</Label></OkButton></PreviewFoot>
          </Preview>

          <LogoutDialog>
            <LogoutTop>
              <LogoutTitle>Do you wish to log out?</LogoutTitle>
              <Icon size={10} vb="0 0 10 10" sw={1.3}><path d="m0 3 10 10M10 3 0 13" /></Icon>
            </LogoutTop>
            <LogoutText>
              <LogoutLine $ls={0.13}>You are logged in to Manage as Jain, Anku. Logging out also logs you out of each application that</LogoutLine>
              <LogoutLine $ls={0.21}>is open in the same browser. To ensure a secure log out, close all open browser windows.</LogoutLine>
            </LogoutText>
            <LogoutFoot>
              <DialogButton><Label $size={14} $ls={0.12}>Cancel</Label></DialogButton>
              <DialogButton $primary><Label $size={14} $ls={0.05}>Log out</Label></DialogButton>
            </LogoutFoot>
          </LogoutDialog>
        </Frame>
      </FrameWrap>

      <DarkBar>
        <Slot $w={48}><Svg width="16" height="16" viewBox="0 0 16 16" fill="#fff"><path d="M0 2.200 7 1.200v6.300H0zM8 1l8-1v7.500H8zM0 8.500h7v6.300L0 13.800zM8 8.500h8V16l-8-1z" /></Svg></Slot>
        <Slot $w={48}><Icon size={22} vb="0 0 22 22" sw={2.2}><circle cx="13" cy="9" r="8" /><path d="M7.500 14.500 1 21" /></Icon></Slot>
        <Slot $w={48}><Icon w={16} h={16} vb="0 0 16 16" sw={1.2}><path d="M.5 0v2.500h10V0M.5 16v-2.500h10V16M.5 5h10v6H.5zM14 0v16" /><path d="M12.500 4.500h3.500v3h-3.500z" fill="#fff" stroke="none" /></Icon></Slot>
        <DarkApp $on><Edge /><Label $ls={-0.2}>Manage - Profile 1 ...</Label></DarkApp>
        {files.map(([f, ls]) => (
          <DarkApp key={f}><Excel /><Label $ls={ls}>{f}</Label></DarkApp>
        ))}
        <Spacer />
        <Slot $w={24}><Chevron w={12} h={6} d="m.5 5.800 5.500-5.300 5.500 5.300" sw={1.4} /></Slot>
        <Slot $w={24}><Volume /></Slot>
        <TwoLine $w={35} $lh={17} $pt={3}><Label $ls={-0.3}>ENG</Label><Label $ls={-0.3}>US</Label></TwoLine>
        <TwoLine $w={65} $lh={17} $pt={2}><Label $ls={-0.25}>9:08 AM</Label><Label $ls={-0.48}>5/16/2025</Label></TwoLine>
        <BarEnd />
      </DarkBar>

      <LightBar>
        <WeatherSlot>
          <Svg width="22" height="22" viewBox="0 0 22 22">
            <circle cx="12" cy="11" r="10.500" fill="#f8a51b" />
            <path d="M2 14h20a10.500 10.500 0 0 1-20 0z" fill="#ef7a12" />
            <path d="M0 7h9M12 7h6M4 11h14M0 15h8M11 15h11M4 18h8" stroke="#ffe08a" strokeWidth="1.300" />
          </Svg>
          <Badge>7</Badge>
        </WeatherSlot>
        <Slot $w={158} />
        <Svg width="23" height="23" viewBox="0 0 23 23">
          <defs><linearGradient id="win" x1="0" y1="0" x2="1" y2="1"><stop offset="0" stopColor="#4cc8f7" /><stop offset="1" stopColor="#0572cf" /></linearGradient></defs>
          <path d="M0 0h11v11H0zM12 0h11v11H12zM0 12h11v11H0zM12 12h11v11H12z" fill="url(#win)" />
        </Svg>
        <SearchPill><Icon size={16} vb="0 0 22 22" sw={2.4} color="#222"><circle cx="9.500" cy="9.500" r="8" /><path d="m15 15 6 6" /></Icon><Label $size={13}>Search</Label></SearchPill>
        {dock.map((d, i) => (
          <DockItem key={i} $bg={d.bg}>{d.art}{d.dot && <Dot $c={d.dot} $w={d.dotW} />}</DockItem>
        ))}
        <Spacer />
        <Slot $w={32}><Chevron w={10} h={6} d="m0 5.500 5-5 5 5" sw={1.2} /></Slot>
        <Slot $w={32}><Icon w={16} h={13} vb="0 0 16 13" sw={1.3}><path d="M4 11.500a3.400 3.400 0 0 1-.5-6.500 4.600 4.600 0 0 1 9 0 3.300 3.300 0 0 1-.5 6.500z" fill="#b5b5b5" /><path d="M1.500.5l13 12" /></Icon></Slot>
        <Slot $w={32}><Icon w={15} h={15} vb="0 0 15 15" sw={1.3} color="#1b4fa0"><path d="M14 1 1 7.500l6 1.500 3.500 5z" /></Icon></Slot>
        <TwoLine $w={45} $lh={16} $pt={2}><Label $ls={-0.2}>ENG</Label><Label>IN</Label></TwoLine>
        <Slot $w={29}><Icon w={14} h={12} vb="0 0 14 12" sw={1.2}><path d="M1 4.500C4.500.8 9.500.8 13 4.500" opacity=".4" /><path d="M3 6.800c2.300-2.500 5.700-2.500 8 0M5 9c1.200-1.300 2.800-1.300 4 0" /><circle cx="7" cy="10.500" r="1" fill="#1f1f1f" /></Icon></Slot>
        <Slot $w={21}><Volume w={16} /></Slot>
        <Slot $w={26}><Icon w={16} h={13} vb="0 0 16 13" sw={1.1}><rect x="1" y="3.500" width="12.500" height="8" rx="1.500" /><path d="M5 5.500h7v4H3z" fill="#1f1f1f" /><path d="M15.200 6v3" strokeWidth="1.500" /><path d="M4 0 1.500 4h2L2.500 7 6 3H4z" fill="#1f1f1f" stroke="none" /></Icon></Slot>
        <TwoLine $w={74} $lh={16} $pt={1} $align="flex-end"><Label $ls={-0.42}>13:38</Label><Label>16-05-2025</Label></TwoLine>
        <Slot $w={19} />
      </LightBar>
    </Screen>
  );
}
